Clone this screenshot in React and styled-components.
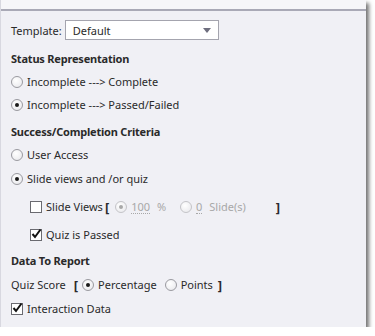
import React from 'react'
import styled, { createGlobalStyle } from 'styled-components';

const Global = createGlobalStyle`
  body {
    margin: 0;
    background: #ffffff;
    font-family: "Noto Sans", "DejaVu Sans", sans-serif;
  }
`;

const Panel = styled.div`
  width: 366px;
  height: 327px;
  box-sizing: border-box;
  background: #f0f0f5;
  border-left: 1px solid #d8d8e0;
  box-shadow: 3px 3px 4px rgba(0, 0, 0, 0.55);
  display: flex;
  flex-direction: column;
  font-size: 11px;
  color: #2a2a2a;
`;
const TopStrip = styled.div`
  height: 9px;
  background: #f6f6f9;
  border-bottom: 2px solid #a9a9b6;
  flex-shrink: 0;
`;
const Row = styled.div`
  display: flex;
  align-items: center;
  flex-shrink: 0;
  height: ${p => p.$h || 23}px;
  margin-top: ${p => p.$mt || 0}px;
  padding-left: ${p => p.$indent || 10}px;
  white-space: nowrap;
`;
const Heading = styled.div`
  font-weight: bold;
  letter-spacing: -0.2px;
`;
const Label = styled.span`
  margin-right: 3px;
`;
const Select = styled.div`
  width: 154px;
  height: 20px;
  box-sizing: border-box;
  border: 1px solid #a4a4ae;
  background: #fff;
  display: flex;
  align-items: center;
  justify-content: space-between;
  padding: 0 7px 0 7px;
`;
const Arrow = styled.span`
  width: 0;
  height: 0;
  border-left: 4px solid transparent;
  border-right: 4px solid transparent;
  border-top: 5px solid #6e6e7e;
`;
const Option = styled.label`
  display: flex;
  align-items: center;
  gap: 4px;
  color: ${p => (p.$disabled ? '#a8a8a8' : 'inherit')};
  margin-right: ${p => p.$mr || 0}px;
`;
const Radio = styled.span`
  width: 12px;
  height: 12px;
  box-sizing: border-box;
  border-radius: 50%;
  border: 1px solid ${p => (p.$disabled ? '#c4c4c8' : '#9a9aa0')};
  background: radial-gradient(circle at 40% 35%, #ffffff, #e6e6ea);
  display: flex;
  align-items: center;
  justify-content: center;
  &::after {
    content: "";
    width: 4px;
    height: 4px;
    border-radius: 50%;
    background: ${p => (p.$disabled ? '#a8a8a8' : '#1a1a1a')};
    display: ${p => (p.$checked ? 'block' : 'none')};
  }
`;
const Box = styled.span`
  width: 12px;
  height: 12px;
  box-sizing: border-box;
  border: 1px solid #6a6a70;
  background: #fff;
  position: relative;
  flex-shrink: 0;
`;
const Dotted = styled.span`
  border-bottom: 1px dotted #a8a8a8;
  line-height: 13px;
`;
const Bracket = styled.span`
  font-weight: bold;
  font-size: 13px;
  margin: 0 ${p => p.$mr ?? 4}px 0 ${p => p.$ml ?? 4}px;
`;

function Check({ checked }) {
  return (
    <Box>
      {checked && (
        <svg width="12" height="12" viewBox="0 0 12 12" style={{ position: 'absolute', left: -1, top: -2 }}>
          <path d="M2.5 6 L5 9 L10.5 1.5" fill="none" stroke="#111" strokeWidth="2" />
        </svg>
      )}
    </Box>
  );
}

export default function App() {
  return (
    <>
      <Global />
      <Panel>
        <TopStrip />
        <Row $mt={9} $h={20}>
          <Label>Template:</Label>
          <Select>
            <span>Default</span>
            <Arrow />
          </Select>
        </Row>
        <Row $mt={6} $h={24}><Heading>Status Representation</Heading></Row>
        <Row $mt={0}><Option><Radio />Incomplete ---&gt; Complete</Option></Row>
        <Row $mt={0}><Option><Radio $checked />Incomplete ---&gt; Passed/Failed</Option></Row>
        <Row $mt={3} $h={24}><Heading>Success/Completion Criteria</Heading></Row>
        <Row $mt={0}><Option><Radio />User Access</Option></Row>
        <Row $mt={1}><Option><Radio $checked />Slide views and /or quiz</Option></Row>
        <Row $mt={5} $indent={29}>
          <Option><Check />Slide Views</Option>
          <Bracket $ml={2} $mr={6}>[</Bracket>
          <Option $disabled $mr={14}><Radio $disabled $checked /><Dotted>100</Dotted>&nbsp;%</Option>
          <Option $disabled $mr={26}><Radio $disabled /><Dotted>0</Dotted>&nbsp;Slide(s)</Option>
          <Bracket>]</Bracket>
        </Row>
        <Row $mt={5} $indent={29}><Option><Check checked />Quiz is Passed</Option></Row>
        <Row $mt={2} $h={24}><Heading>Data To Report</Heading></Row>
        <Row $mt={1}>
          <span>Quiz Score</span>
          <Bracket $ml={8} $mr={4}>[</Bracket>
          <Option $mr={8}><Radio $checked />Percentage</Option>
          <Option><Radio />Points</Option>
          <Bracket $ml={5}>]</Bracket>
        </Row>
        <Row $mt={1}><Option><Check checked />Interaction Data</Option></Row>
      </Panel>
    </>
  );
}
